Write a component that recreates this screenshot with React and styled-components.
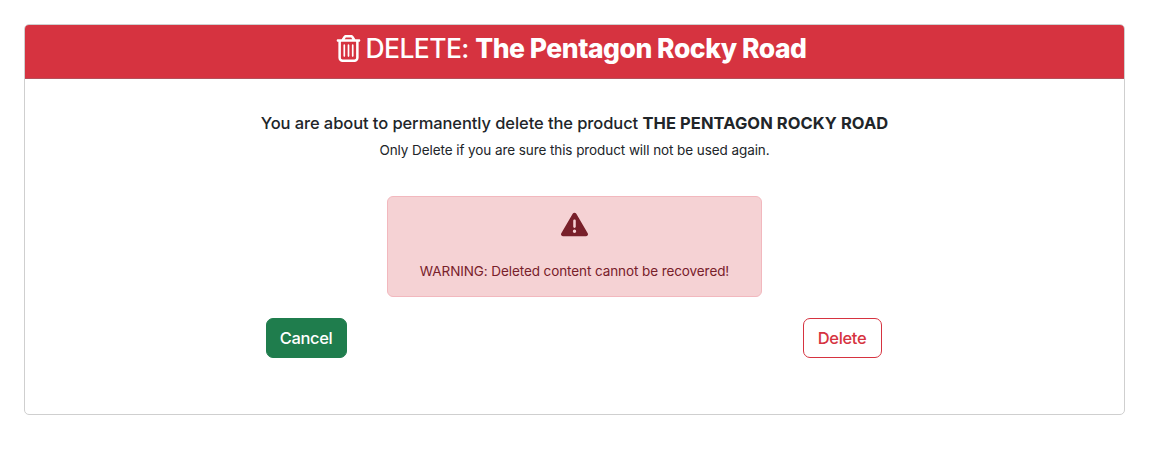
import React from 'react';
import styled, { createGlobalStyle } from 'styled-components';
import { FaRegTrashCan, FaTriangleExclamation } from 'react-icons/fa6';

const Global = createGlobalStyle`
  *, *::before, *::after { box-sizing: border-box; }
  body {
    margin: 0;
    background: #fff;
    color: #212529;
    font-family: Inter, sans-serif;
  }
`;

const Page = styled.main`
  padding: 24px 37px 24px 24px;
`;

const Card = styled.section`
  height: 391px;
  border: 1px solid #cfcfcf;
  border-radius: 5px;
  overflow: hidden;
  background: #fff;
`;

const Header = styled.header`
  height: 54px;
  padding: 0 8px 7px 0;
  display: flex;
  align-items: center;
  justify-content: center;
  gap: 4px;
  background: #d63340;
  color: #fff;
  border-bottom: 1px solid #b5505a;
`;

const Title = styled.h1`
  margin: 0;
  font-size: 26.5px;
  font-weight: 500;
  line-height: 32px;
  letter-spacing: -0.6px;
  white-space: nowrap;

  b { font-weight: 800; letter-spacing: -0.47px; }
`;

const Body = styled.div`
  padding-top: 32px;
  display: flex;
  flex-direction: column;
  align-items: center;
`;

const Lead = styled.p`
  margin: 0;
  font-size: 16.5px;
  font-weight: 500;
  line-height: 24px;
  letter-spacing: -0.085px;
  white-space: nowrap;

  b { letter-spacing: 0.08px; }
`;

const Note = styled.p`
  margin: 5px 0 0;
  font-size: 13.5px;
  line-height: 20px;
  letter-spacing: -0.08px;
  white-space: nowrap;
`;

const Alert = styled.div`
  width: 375px;
  height: 101px;
  margin-top: 36px;
  padding-top: 13.6px;
  display: flex;
  flex-direction: column;
  align-items: center;
  gap: 23.4px;
  border: 1px solid #f2b8be;
  border-radius: 6px;
  background: #f5d2d4;
  color: #78202a;
`;

const AlertText = styled.p`
  margin: 0;
  font-size: 13.5px;
  line-height: 20px;
  letter-spacing: -0.09px;
  white-space: nowrap;
`;

const Actions = styled.div`
  width: 616px;
  margin: 21px 1px 0 0;
  display: flex;
  justify-content: space-between;
`;

const Button = styled.button`
  width: ${(p) => p.$width}px;
  height: 40px;
  padding: 0 1px 0 0;
  border: 1px solid ${(p) => (p.$outline ? '#d63340' : '#1f7d4d')};
  border-radius: 7px;
  background: ${(p) => (p.$outline ? '#fff' : '#1f7d4d')};
  color: ${(p) => (p.$outline ? '#d63340' : '#fff')};
  font: 500 16.5px/24px Inter, sans-serif;
  letter-spacing: -0.34px;
`;

export default function App() {
  return (
    <>
      <Global />
      <Page>
        <Card>
          <Header>
            <FaRegTrashCan size={27} />
            <Title>DELETE: <b>The Pentagon Rocky Road</b></Title>
          </Header>
          <Body>
            <Lead>You are about to permanently delete the product <b>THE PENTAGON ROCKY ROAD</b></Lead>
            <Note>Only Delete if you are sure this product will not be used again.</Note>
            <Alert>
              <FaTriangleExclamation size={27} />
              <AlertText>WARNING: Deleted content cannot be recovered!</AlertText>
            </Alert>
            <Actions>
              <Button $width={81}>Cancel</Button>
              <Button $width={79} $outline>Delete</Button>
            </Actions>
          </Body>
        </Card>
      </Page>
    </>
  );
}
